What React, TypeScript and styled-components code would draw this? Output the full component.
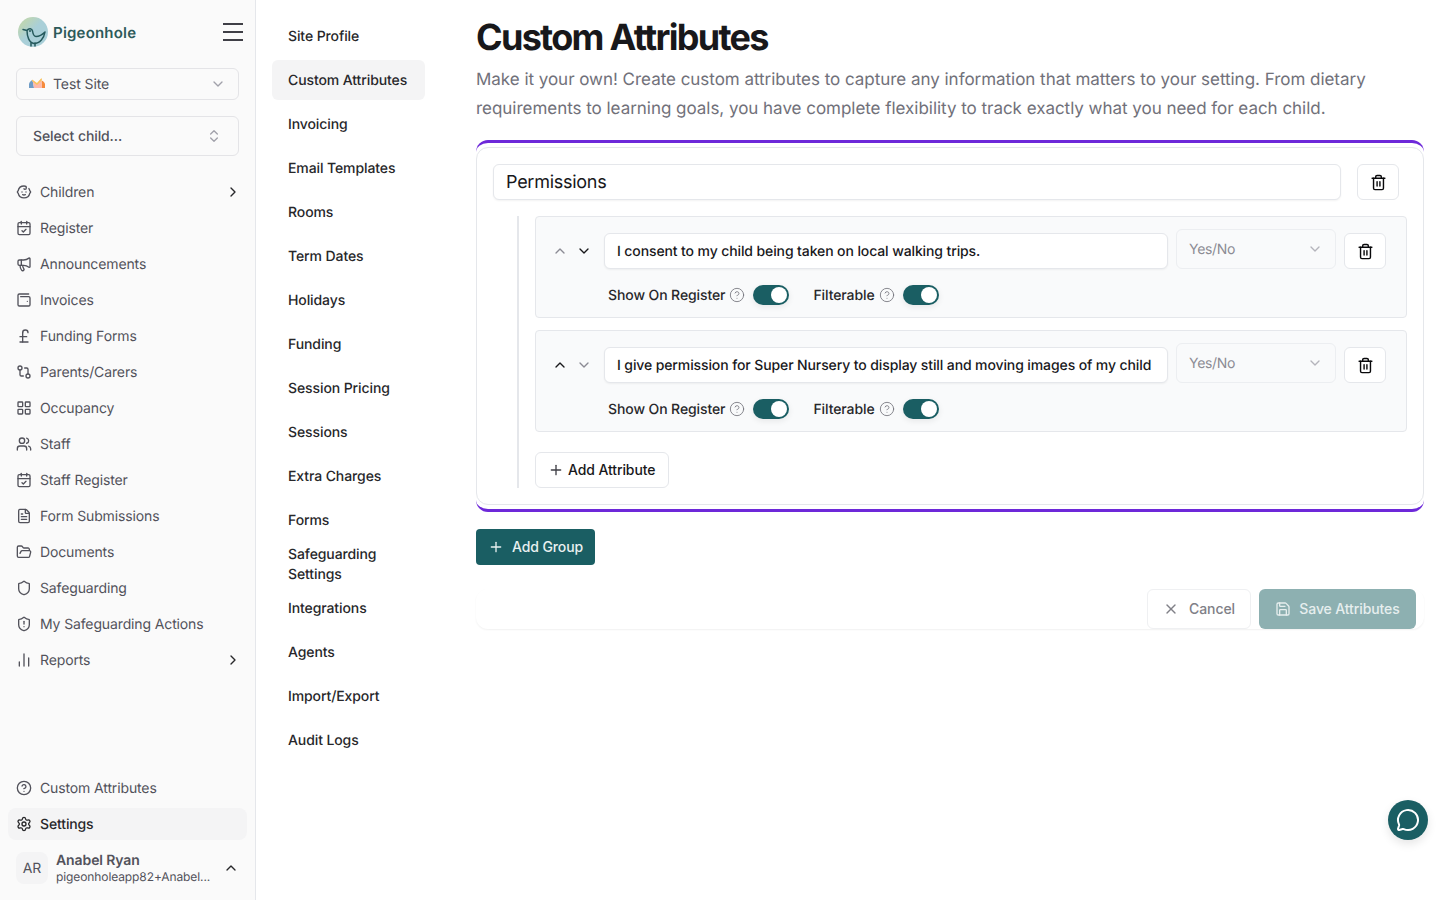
import React from "react"
import styled, { createGlobalStyle } from "styled-components"
import {
  Baby,
  CalendarCheck,
  ChartNoAxesColumn,
  ChevronDown,
  ChevronRight,
  ChevronUp,
  ChevronsUpDown,
  CircleHelp,
  FileText,
  FolderOpen,
  GitCompare,
  LayoutGrid,
  Megaphone,
  MessageCircle,
  Plus,
  PoundSterling,
  Save,
  Settings as SettingsIcon,
  Shield,
  ShieldAlert,
  Trash2,
  Users,
  WalletMinimal,
  X,
} from "lucide-react"

const teal = "#1a5e63"

const GlobalStyle = createGlobalStyle`
  html, body {
    margin: 0;
    padding: 0;
    background: #ffffff;
    font-family: Inter, "Liberation Sans", sans-serif;
    color: #18181b;
    text-rendering: geometricPrecision;
    letter-spacing: -0.1px;
  }
  button { letter-spacing: inherit; }
  * { box-sizing: border-box; }
`

const Page = styled.div`
  display: flex;
  width: 100%;
  height: 900px;
  overflow: hidden;
`

const Sidebar = styled.aside`
  flex: 0 0 256px;
  width: 256px;
  min-width: 0;
  display: flex;
  flex-direction: column;
  background: #fafafa;
  border-right: 1px solid #e5e7eb;
  height: 100%;
`

const LogoRow = styled.div`
  display: flex;
  align-items: center;
  justify-content: space-between;
  padding: 16px 12px 0 17px;
  height: 48px;
`

const Brand = styled.div`
  display: flex;
  align-items: center;
  gap: 4px;
  font-size: 15px;
  font-weight: 600;
  letter-spacing: 0.2px;
  color: #2d5a5a;
`

const SiteSelect = styled.div`
  display: flex;
  align-items: center;
  height: 32px;
  margin: 20px 16px 0;
  padding: 0 12px;
  border: 1px solid #e4e4e7;
  border-radius: 6px;
  font-size: 14px;
  color: #52525b;
  gap: 8px;
  span { flex: 1; }
  svg:last-child { color: #a1a1aa; }
`

const ChildSelect = styled.div`
  display: flex;
  align-items: center;
  justify-content: space-between;
  height: 40px;
  margin: 16px 16px 0;
  padding: 0 16px;
  border: 1px solid #e4e4e7;
  border-radius: 6px;
  font-size: 14px;
  font-weight: 500;
  color: #52525b;
  svg { color: #a1a1aa; }
`

const SideNav = styled.nav`
  display: flex;
  flex-direction: column;
  gap: 4px;
  padding: 20px 8px 0;
`

const SideItem = styled.div<{ $active?: boolean }>`
  display: flex;
  align-items: center;
  gap: 8px;
  height: 32px;
  padding: 0 8px;
  border-radius: 8px;
  font-size: 14px;
  letter-spacing: -0.13px;
  font-weight: ${(p) => (p.$active ? 500 : 400)};
  color: ${(p) => (p.$active ? "#27272a" : "#52525b")};
  background: ${(p) => (p.$active ? "#f4f4f5" : "transparent")};
  span { flex: 1; }
`

const MoreIcon = styled(ChevronRight)`
  margin-right: -2px;
  color: #27272a;
`

const SideFoot = styled.div`
  margin-top: auto;
  display: flex;
  flex-direction: column;
  gap: 4px;
  padding: 0 8px 16px;
`

const UserRow = styled.div`
  display: flex;
  align-items: center;
  gap: 8px;
  height: 32px;
  margin-top: 8px;
  padding: 0 8px;
  color: #52525b;
`

const Avatar = styled.div`
  flex: 0 0 32px;
  height: 32px;
  display: flex;
  align-items: center;
  justify-content: center;
  border-radius: 8px;
  background: #f4f4f5;
  font-size: 14px;
`

const UserText = styled.div`
  flex: 1;
  min-width: 0;
  strong {
    display: block;
    font-size: 14px;
    line-height: 17px;
    font-weight: 600;
    color: #52525b;
  }
  small {
    display: block;
    font-size: 12px;
    line-height: 15px;
    color: #52525b;
    white-space: nowrap;
  }
`

const SettingsNav = styled.nav`
  flex: 0 0 169px;
  margin-left: 16px;
  padding: 16px 16px 0 0;
  display: flex;
  flex-direction: column;
  gap: 4px;
`

const SettingsLink = styled.a<{ $active?: boolean }>`
  display: flex;
  align-items: center;
  height: 40px;
  padding: 1px 16px 0;
  border-radius: 6px;
  font-size: 14px;
  line-height: 20px;
  font-weight: 500;
  color: #27272a;
  background: ${(p) => (p.$active ? "#f4f4f5" : "transparent")};
`

const Main = styled.main`
  flex: 0 0 948px;
  width: 948px;
  min-width: 0;
  margin-left: 35px;
  padding-top: 17px;
`

const Title = styled.h1`
  margin: 0;
  font-size: 36px;
  line-height: 40px;
  font-weight: 700;
  letter-spacing: -1.7px;
  color: #18181b;
`

const Lead = styled.p`
  margin: 9px 0 0;
  font-size: 17px;
  line-height: 29px;
  letter-spacing: -0.03px;
  color: #71717a;
`

const Group = styled.section`
  margin-top: 16px;
  padding: 4px 0;
  border-top: 3px solid #6d28d9;
  border-bottom: 3px solid #6d28d9;
  border-radius: 12px;
`

const GroupCard = styled.div`
  padding: 16px 16px 16px;
  border: 1px solid #e5e7eb;
  border-radius: 12px;
  background: #fff;
`

const GroupHead = styled.div`
  display: flex;
  gap: 16px;
  padding-right: 8px;
`

const TextBox = styled.div<{ $large?: boolean }>`
  flex: 1;
  min-width: 0;
  height: 36px;
  display: flex;
  align-items: center;
  padding: 0 12px;
  background: #fff;
  border: 1px solid #e5e7eb;
  border-radius: 6px;
  box-shadow: 0 1px 2px rgba(0, 0, 0, 0.05);
  font-size: ${(p) => (p.$large ? "18px" : "14px")};
  font-weight: ${(p) => (p.$large ? 400 : 500)};
  letter-spacing: ${(p) => (p.$large ? "-0.27px" : "-0.11px")};
  color: #18181b;
  white-space: nowrap;
  overflow: hidden;
`

const IconButton = styled.button`
  flex: 0 0 42px;
  height: 36px;
  display: flex;
  align-items: center;
  justify-content: center;
  padding: 0;
  background: #fff;
  border: 1px solid #e5e7eb;
  border-radius: 6px;
  color: #09090b;
`

const AttrList = styled.div`
  margin: 16px 0 0 24px;
  padding-left: 16px;
  border-left: 2px solid #e5e7eb;
  display: flex;
  flex-direction: column;
  gap: 12px;
`

const AttrCard = styled.div`
  padding: 12px 20px 12px 12px;
  background: #f9fafb;
  border: 1px solid #e5e7eb;
  border-radius: 4px;
`

const AttrTop = styled.div`
  display: flex;
  align-items: flex-end;
  gap: 8px;
  height: 40px;
`

const Movers = styled.div`
  display: flex;
  height: 36px;
  align-items: center;
`

const Mover = styled.div<{ $off?: boolean }>`
  width: 24px;
  display: flex;
  justify-content: center;
  color: ${(p) => (p.$off ? "#8b8b94" : "#18181b")};
`

const TypeSelect = styled.div`
  flex: 0 0 160px;
  height: 40px;
  display: flex;
  align-items: center;
  justify-content: space-between;
  padding: 0 12px;
  align-self: flex-end;
  border: 1px solid #eceef1;
  border-radius: 6px;
  font-size: 14px;
  letter-spacing: -0.3px;
  color: #8c8c94;
  svg { color: #b4b4bb; }
`

const AttrOptions = styled.div`
  display: flex;
  align-items: center;
  gap: 24px;
  margin: 16px 0 0 60px;
`

const Option = styled.div`
  display: flex;
  align-items: center;
  font-size: 14px;
  font-weight: 500;
  color: #27272a;
  svg { margin: 0 8px 0 4px; color: #71717a; }
`

const Toggle = styled.div`
  position: relative;
  width: 36px;
  height: 20px;
  border-radius: 10px;
  background: ${teal};
  box-shadow: 0 2px 6px rgba(0, 0, 0, 0.08);
  &::after {
    content: "";
    position: absolute;
    top: 2px;
    right: 2px;
    width: 16px;
    height: 16px;
    border-radius: 50%;
    background: #fff;
  }
`

const OutlineButton = styled.button`
  align-self: flex-start;
  height: 36px;
  margin-top: 8px;
  padding: 0 13px 2px 12px;
  display: flex;
  align-items: center;
  gap: 4px;
  background: #fff;
  border: 1px solid #e5e7eb;
  border-radius: 6px;
  font: 500 14px Inter, "Liberation Sans", sans-serif;
  color: #18181b;
  svg { color: #3f3f46; margin-top: 2px; }
`

const AddGroup = styled.button`
  height: 36px;
  margin-top: 17px;
  padding: 0 12px 2px;
  display: flex;
  align-items: center;
  gap: 8px;
  background: ${teal};
  border: 0;
  border-radius: 4px;
  font: 500 14px Inter, "Liberation Sans", sans-serif;
  color: #e8f0f0;
  svg { margin-top: 2px; }
`

const Footer = styled.div`
  display: flex;
  justify-content: flex-end;
  gap: 8px;
  margin-top: 24px;
  padding-right: 8px;
  border-radius: 12px;
  box-shadow: 0 1px 2px rgba(0, 0, 0, 0.06);
`

const CancelButton = styled.button`
  height: 40px;
  width: 104px;
  padding: 0 0 2px;
  display: flex;
  align-items: center;
  justify-content: center;
  gap: 10px;
  background: #fff;
  border: 1px solid #eff0f2;
  border-radius: 6px;
  font: 500 14px Inter, "Liberation Sans", sans-serif;
  color: #808087;
  svg { margin-top: 2px; }
`

const SaveButton = styled.button`
  height: 40px;
  width: 157px;
  padding: 0 0 2px;
  display: flex;
  align-items: center;
  justify-content: center;
  gap: 8px;
  background: #8db0b1;
  border: 0;
  border-radius: 6px;
  font: 500 14px Inter, "Liberation Sans", sans-serif;
  color: #e6eeee;
  svg { margin-top: 2px; }
`

const ChatBubble = styled.div`
  position: fixed;
  left: 1388px;
  top: 800px;
  width: 40px;
  height: 40px;
  display: flex;
  align-items: center;
  justify-content: center;
  border-radius: 50%;
  background: ${teal};
  color: #fff;
  box-shadow: 0 4px 10px rgba(0, 0, 0, 0.1);
`

const Logo = () => (
  <svg width="32" height="32" viewBox="0 0 32 32">
    <defs>
      <linearGradient id="logoFill" x1="0.1" y1="0.1" x2="0.6" y2="0.6">
        <stop offset="0.2" stopColor="#bcd5b6" />
        <stop offset="0.75" stopColor="#a9cfd8" />
      </linearGradient>
    </defs>
    <circle cx="16" cy="16" r="15" fill="url(#logoFill)" />
    <path
      d="M6 13.5l4 1C10 20 12 27 17 27.5c6 0 10-5.500 11-11.500-3 3-6 4.500-9 4.500-2.500 0-3-2.500-3.500-5.500-.5-2.500-3.500-3.500-5.500-.5"
      fill="none"
      stroke="#25595c"
      strokeWidth="1.5"
      strokeLinejoin="round"
      strokeLinecap="round"
    />
    <circle cx="13" cy="15" r="1" fill="#25595c" />
    <path d="M14 27v3M18 27v3" stroke="#25595c" strokeWidth="1.5" strokeLinecap="round" />
  </svg>
)

const SiteMark = () => (
  <svg width="16" height="14" viewBox="0 2 16 14">
    <path d="M0 9c.5-2 2-3.500 3.500-4L5 13H0Z" fill="#6f9cc6" />
    <path d="M3.500 5 8 8.500 12 4 13 13H5Z" fill="#fdb9ac" />
    <path d="M3 4.500 8 8l4.500-5 .5 2-5 5-5-4Z" fill="#f9c45c" />
    <path d="M12.500 5.500c1.500.5 3 1.500 3.500 3.500v4h-3Z" fill="#f58a3c" />
  </svg>
)

const MenuMark = () => (
  <svg width="20" height="18" viewBox="0 0 20 18">
    <path d="M0 1h20M0 9h20M0 17h20" stroke="#3f3f46" strokeWidth="2" />
  </svg>
)

const navItems: { label: string; icon: React.ReactNode; more?: boolean }[] = [
  { label: "Children", icon: <Baby size={16} />, more: true },
  { label: "Register", icon: <CalendarCheck size={16} /> },
  { label: "Announcements", icon: <Megaphone size={16} /> },
  { label: "Invoices", icon: <WalletMinimal size={16} /> },
  { label: "Funding Forms", icon: <PoundSterling size={16} /> },
  { label: "Parents/Carers", icon: <GitCompare size={16} /> },
  { label: "Occupancy", icon: <LayoutGrid size={16} /> },
  { label: "Staff", icon: <Users size={16} /> },
  { label: "Staff Register", icon: <CalendarCheck size={16} /> },
  { label: "Form Submissions", icon: <FileText size={16} /> },
  { label: "Documents", icon: <FolderOpen size={16} /> },
  { label: "Safeguarding", icon: <Shield size={16} /> },
  { label: "My Safeguarding Actions", icon: <ShieldAlert size={16} /> },
  { label: "Reports", icon: <ChartNoAxesColumn size={16} />, more: true },
]

const settingsLinks = [
  "Site Profile",
  "Custom Attributes",
  "Invoicing",
  "Email Templates",
  "Rooms",
  "Term Dates",
  "Holidays",
  "Funding",
  "Session Pricing",
  "Sessions",
  "Extra Charges",
  "Forms",
  "Safeguarding Settings",
  "Integrations",
  "Agents",
  "Import/Export",
  "Audit Logs",
]

const attributes = [
  { text: "I consent to my child being taken on local walking trips.", upOff: true, downOff: false },
  { text: "I give permission for Super Nursery to display still and moving images of my child", upOff: false, downOff: true },
]

const App: React.FC = () => {
  return (
    <Page>
      <GlobalStyle />
      <Sidebar>
        <LogoRow>
          <Brand>
            <Logo />
            Pigeonhole
          </Brand>
          <MenuMark />
        </LogoRow>
        <SiteSelect>
          <SiteMark />
          <span>Test Site</span>
          <ChevronDown size={16} />
        </SiteSelect>
        <ChildSelect>
          Select child...
          <ChevronsUpDown size={16} />
        </ChildSelect>
        <SideNav>
          {navItems.map((item) => (
            <SideItem key={item.label}>
              {item.icon}
              <span>{item.label}</span>
              {item.more && <MoreIcon size={16} />}
            </SideItem>
          ))}
        </SideNav>
        <SideFoot>
          <SideItem>
            <CircleHelp size={16} />
            <span>Custom Attributes</span>
          </SideItem>
          <SideItem $active>
            <SettingsIcon size={16} />
            <span>Settings</span>
          </SideItem>
          <UserRow>
            <Avatar>AR</Avatar>
            <UserText>
              <strong>Anabel Ryan</strong>
              <small>pigeonholeapp82+Anabel...</small>
            </UserText>
            <ChevronUp size={16} color="#27272a" />
          </UserRow>
        </SideFoot>
      </Sidebar>

      <SettingsNav>
        {settingsLinks.map((link) => (
          <SettingsLink key={link} $active={link === "Custom Attributes"}>
            {link}
          </SettingsLink>
        ))}
      </SettingsNav>

      <Main>
        <Title>Custom Attributes</Title>
        <Lead>
          Make it your own! Create custom attributes to capture any information that matters to your setting. From
          dietary requirements to learning goals, you have complete flexibility to track exactly what you need for each
          child.
        </Lead>
        <Group>
          <GroupCard>
            <GroupHead>
              <TextBox $large>Permissions</TextBox>
              <IconButton>
                <Trash2 size={17} />
              </IconButton>
            </GroupHead>
            <AttrList>
              {attributes.map((attr) => (
                <AttrCard key={attr.text}>
                  <AttrTop>
                    <Movers>
                      <Mover $off={attr.upOff}>
                        <ChevronUp size={16} />
                      </Mover>
                      <Mover $off={attr.downOff}>
                        <ChevronDown size={16} />
                      </Mover>
                    </Movers>
                    <TextBox>{attr.text}</TextBox>
                    <TypeSelect>
                      Yes/No
                      <ChevronDown size={16} />
                    </TypeSelect>
                    <IconButton>
                      <Trash2 size={17} />
                    </IconButton>
                  </AttrTop>
                  <AttrOptions>
                    <Option>
                      Show On Register
                      <CircleHelp size={16} strokeWidth={1.25} />
                      <Toggle />
                    </Option>
                    <Option>
                      Filterable
                      <CircleHelp size={16} strokeWidth={1.25} />
                      <Toggle />
                    </Option>
                  </AttrOptions>
                </AttrCard>
              ))}
              <OutlineButton>
                <Plus size={16} />
                Add Attribute
              </OutlineButton>
            </AttrList>
          </GroupCard>
        </Group>
        <AddGroup>
          <Plus size={16} />
          Add Group
        </AddGroup>
        <Footer>
          <CancelButton>
            <X size={16} />
            Cancel
          </CancelButton>
          <SaveButton>
            <Save size={16} />
            Save Attributes
          </SaveButton>
        </Footer>
      </Main>

      <ChatBubble>
        <MessageCircle size={24} strokeWidth={2} />
      </ChatBubble>
    </Page>
  )
}

export default App
